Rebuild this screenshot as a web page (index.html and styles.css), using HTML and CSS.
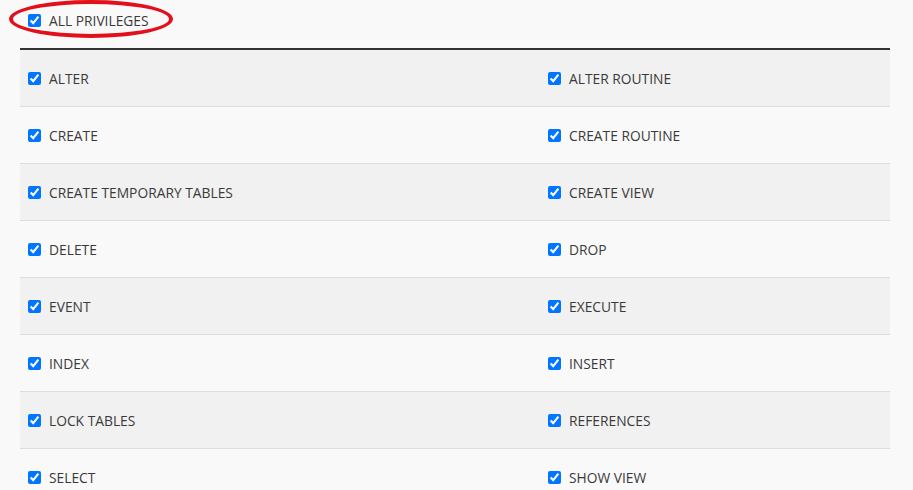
FILE: index.html
```html
<!DOCTYPE html>
<html>
<head>
<meta charset="utf-8">
<link rel="stylesheet" href="styles.css">
</head>
<body>
<div class="page">
  <div class="all">
    <label class="check"><input type="checkbox" checked><span>ALL PRIVILEGES</span></label>
    <div class="circle"></div>
  </div>
  <div class="table">
    <div class="row"><label class="check cell"><input type="checkbox" checked><span>ALTER</span></label><label class="check cell"><input type="checkbox" checked><span>ALTER ROUTINE</span></label></div>
    <div class="row"><label class="check cell"><input type="checkbox" checked><span>CREATE</span></label><label class="check cell"><input type="checkbox" checked><span>CREATE ROUTINE</span></label></div>
    <div class="row"><label class="check cell"><input type="checkbox" checked><span>CREATE TEMPORARY TABLES</span></label><label class="check cell"><input type="checkbox" checked><span>CREATE VIEW</span></label></div>
    <div class="row"><label class="check cell"><input type="checkbox" checked><span>DELETE</span></label><label class="check cell"><input type="checkbox" checked><span>DROP</span></label></div>
    <div class="row"><label class="check cell"><input type="checkbox" checked><span>EVENT</span></label><label class="check cell"><input type="checkbox" checked><span>EXECUTE</span></label></div>
    <div class="row"><label class="check cell"><input type="checkbox" checked><span>INDEX</span></label><label class="check cell"><input type="checkbox" checked><span>INSERT</span></label></div>
    <div class="row"><label class="check cell"><input type="checkbox" checked><span>LOCK TABLES</span></label><label class="check cell"><input type="checkbox" checked><span>REFERENCES</span></label></div>
    <div class="row"><label class="check cell"><input type="checkbox" checked><span>SELECT</span></label><label class="check cell"><input type="checkbox" checked><span>SHOW VIEW</span></label></div>
  </div>
</div>
</body>
</html>
```
FILE: styles.css
```css
html, body {
  margin: 0;
  padding: 0;
  background: #f9f9f9;
}
body {
  font-family: "Open Sans", "Liberation Sans", sans-serif;
  font-size: 13.8px;
  color: #3a3a3a;
  overflow: hidden;
}
.page {
  padding: 0 23px 0 20px;
}
.all {
  position: relative;
  height: 40px;
  margin-bottom: 8px;
  display: flex;
  align-items: center;
  padding-left: 8px;
}
.circle {
  position: absolute;
  left: -11px;
  top: 0;
  width: 156px;
  height: 30px;
  border: 4px solid #e3101b;
  border-radius: 50%;
}
.check {
  display: flex;
  align-items: center;
  gap: 8px;
}
.check input {
  margin: 0;
  width: 13px;
  height: 13px;
  accent-color: #0075ff;
}
.table {
  border-top: 2px solid #333;
}
.row {
  display: grid;
  grid-template-columns: 520px 1fr;
  height: 56px;
  border-bottom: 1px solid #ddd;
}
.row:nth-child(odd) {
  background: #f1f1f1;
}
.row:nth-child(even) {
  background: #f9f9f9;
}
.cell {
  padding: 0 8px;
}
```
